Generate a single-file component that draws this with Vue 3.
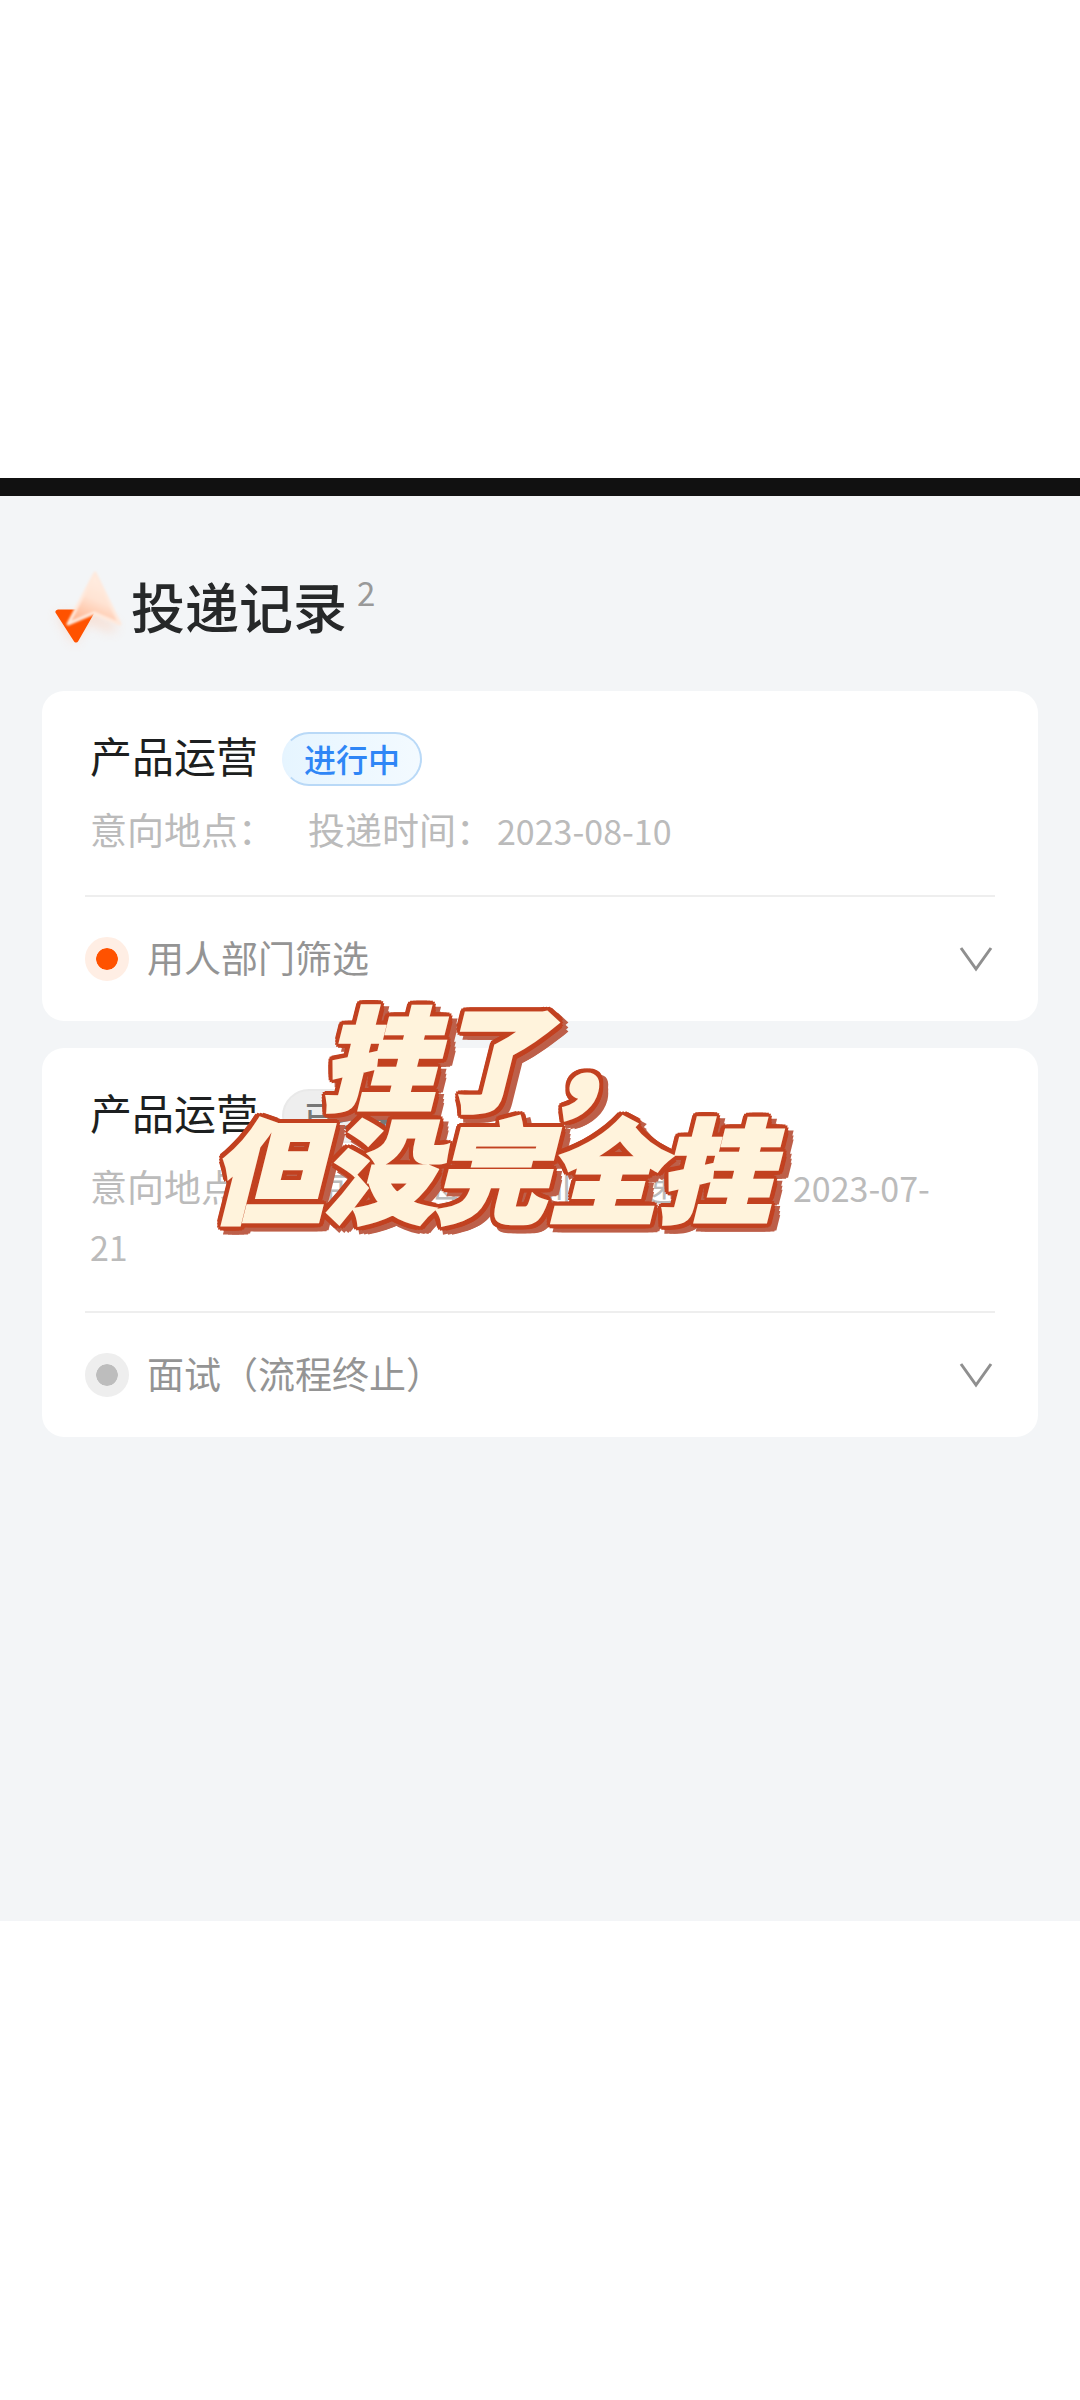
<script setup>
const records = [
  {
    id: 1,
    title: '产品运营',
    status: '进行中',
    tone: 'active',
    place: '',
    date: '2023-08-10',
    stage: '用人部门筛选',
  },
  {
    id: 2,
    title: '产品运营',
    status: '已结束',
    tone: 'ended',
    place: '北京、上海、深圳',
    date: '2023-07-21',
    stage: '面试（流程终止）',
  },
]
</script>

<template>
  <div class="page">
    <main class="screen">
      <header class="heading">
        <svg class="logo" viewBox="0 0 84 96" aria-hidden="true">
          <defs>
            <linearGradient id="plane" x1="0.7" y1="0" x2="0.25" y2="1">
              <stop offset="0" stop-color="#fff0e6" />
              <stop offset="0.5" stop-color="#ffe3d3" />
              <stop offset="1" stop-color="#ffb48e" />
            </linearGradient>
            <filter id="glow" x="-50%" y="-50%" width="200%" height="200%">
              <feGaussianBlur stdDeviation="6" />
            </filter>
            <filter id="soft" x="-20%" y="-20%" width="140%" height="140%">
              <feGaussianBlur stdDeviation="1" />
            </filter>
          </defs>
          <path d="M14 54H48L33 84ZM44 48L76 66L70 72L44 62Z" fill="#ffb996" opacity="0.4" filter="url(#glow)" />
          <path d="M16 52H50L34 80Z" fill="#ff5200" stroke="#ff5200" stroke-width="5" stroke-linejoin="round" />
          <path d="M53 13L26 64L52 53L78 64Z" fill="url(#plane)" stroke="#ffe9dc" stroke-width="3" stroke-linejoin="round" filter="url(#soft)" />
        </svg>
        <h1>投递记录</h1>
        <span class="count">2</span>
      </header>

      <section class="list">
        <article v-for="item in records" :key="item.id" class="card">
          <div class="top">
            <h2>{{ item.title }}</h2>
            <span class="badge" :class="item.tone">{{ item.status }}</span>
          </div>
          <p class="meta">
            <span class="place">意向地点：{{ item.place }}</span>
            <span>投递时间：</span><span class="date">{{ item.date }}</span>
          </p>
          <button class="stage" type="button">
            <span class="dot" :class="item.tone"></span>
            <span class="label">{{ item.stage }}</span>
            <svg class="chevron" viewBox="0 0 34 26" aria-hidden="true">
              <path d="M2 2L17 23L32 2" fill="none" stroke="#8f8f8f" stroke-width="3" />
            </svg>
          </button>
        </article>

        <p class="caption">挂了，<br />但没完全挂</p>
      </section>
    </main>
  </div>
</template>

<style>
body {
  margin: 0;
  background: #fff;
}
</style>

<style scoped>
.page {
  padding: 478px 0;
  font-family: 'Noto Sans CJK SC', sans-serif;
}

.screen {
  min-height: 1443px;
  box-sizing: border-box;
  border-top: 18px solid #111;
  background: #f3f5f7;
  padding: 64px 42px 0;
}

.heading {
  display: flex;
  align-items: center;
  height: 96px;
}

.logo {
  width: 84px;
  height: 96px;
}

h1 {
  margin: 0 0 0 5px;
  padding-bottom: 4px;
  font-size: 54px;
  line-height: 80px;
  font-weight: 500;
  color: #262829;
}

.count {
  margin-left: 10px;
  padding-bottom: 32px;
  font-size: 33px;
  line-height: 40px;
  color: #999;
}

.list {
  position: relative;
  display: flex;
  flex-direction: column;
  gap: 27px;
  margin-top: 35px;
}

.card {
  background: #fff;
  border-radius: 22px;
  padding: 40px 43px 0;
}

.top {
  display: flex;
  align-items: center;
  gap: 24px;
  height: 56px;
  padding-left: 5px;
}

h2 {
  margin: 0;
  padding-bottom: 8px;
  font-size: 42px;
  line-height: 54px;
  font-weight: 400;
  color: #1d1f20;
}

.badge {
  box-sizing: border-box;
  height: 54px;
  padding: 0 20px;
  border-radius: 27px;
  font-size: 32px;
  line-height: 48px;
  font-weight: 500;
}

.badge.active {
  border: 2px solid #b9d9f7;
  border-left-color: #e6f4ff;
  background: linear-gradient(90deg, #e6f5ff, #f3faff);
  color: #2f86f6;
}

.badge.ended {
  border: 2px solid #e9e9e9;
  background: #eee;
  color: #777;
}

.meta {
  margin: 0;
  padding: 13px 50px 36px 5px;
  font-size: 37px;
  line-height: 59px;
  color: #bbb;
}

.place {
  margin-right: 33px;
}

.date {
  font-size: 34px;
  line-height: 34px;
  margin-left: 4px;
}

.stage {
  display: flex;
  align-items: center;
  width: 100%;
  height: 126px;
  padding: 0;
  border: 0;
  border-top: 2px solid #eee;
  background: none;
  font-family: inherit;
  text-align: left;
}

.dot {
  box-sizing: border-box;
  width: 44px;
  height: 44px;
  border: 11px solid;
  border-radius: 50%;
  background-clip: padding-box;
}

.dot.active {
  border-color: #ffeee4;
  background-color: #ff5200;
}

.dot.ended {
  border-color: #eee;
  background-color: #bdbdbd;
}

.label {
  flex: 1;
  margin-left: 18px;
  padding-bottom: 4px;
  font-size: 37px;
  line-height: 54px;
  color: #949494;
}

.chevron {
  width: 34px;
  height: 26px;
  margin-right: 2px;
}

.caption {
  position: absolute;
  top: 306px;
  left: 168px;
  margin: 0;
  text-align: center;
  font-size: 112px;
  line-height: 112px;
  font-weight: 900;
  font-style: italic;
  white-space: nowrap;
  color: #fff3dc;
  -webkit-text-stroke: 4px #fff3dc;
  text-shadow:
    6px 0 #c24120,
    -6px 0 #c24120,
    0 6px #c24120,
    0 -6px #c24120,
    6px 3px #c24120,
    6px -3px #c24120,
    -6px 3px #c24120,
    -6px -3px #c24120,
    3px 6px #c24120,
    3px -6px #c24120,
    -3px 6px #c24120,
    -3px -6px #c24120,
    5px 5px #c24120,
    -5px 5px #c24120,
    5px -5px #c24120,
    -5px -5px #c24120,
    11px 0 #bd5f49,
    11px 5px #bd5f49,
    11px 9px #bd5f49,
    9px 10px #bd5f49,
    5px 10px #bd5f49,
    0 10px #bd5f49;
}
</style>
